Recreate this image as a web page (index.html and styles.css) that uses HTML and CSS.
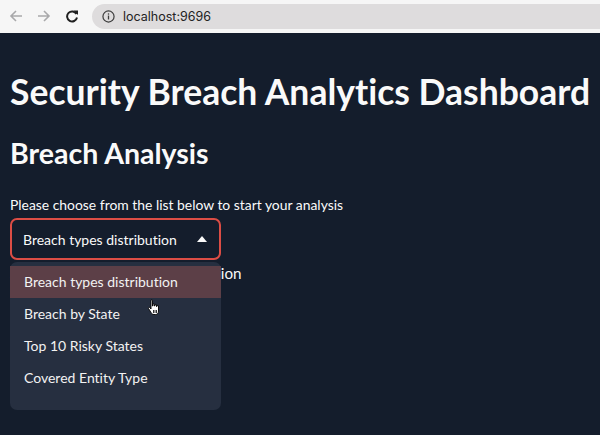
FILE: index.html
```html
<!DOCTYPE html>
<html>
<head>
<meta charset="utf-8">
<link rel="stylesheet" href="styles.css">
</head>
<body>
<div class="chrome">
  <div class="nav">
    <svg class="nav-icon" width="14" height="14" viewBox="0 0 14 14"><path d="M13 7H2M7 2L2 7l5 5" fill="none" stroke="#a9a9ab" stroke-width="1.6"/></svg>
    <svg class="nav-icon" width="14" height="14" viewBox="0 0 14 14"><path d="M1 7h11M7 2l5 5-5 5" fill="none" stroke="#a9a9ab" stroke-width="1.6"/></svg>
    <svg class="nav-icon" width="14" height="14" viewBox="0 0 14 14"><path d="M11.5 5A5 5 0 1 0 12 8.5" fill="none" stroke="#1f1f1f" stroke-width="2"/><path d="M8.5 1.5h4.5v4.5z" fill="#1f1f1f"/></svg>
  </div>
  <div class="omnibox">
    <svg width="13" height="13" viewBox="0 0 14 14"><circle cx="7" cy="7" r="6" fill="none" stroke="#3c3c3c" stroke-width="1.3"/><rect x="6.3" y="6" width="1.4" height="4.2" fill="#3c3c3c"/><rect x="6.3" y="3.6" width="1.4" height="1.4" fill="#3c3c3c"/></svg>
    <span class="url">localhost:9696</span>
  </div>
</div>
<main class="page">
  <h1 class="title">Security Breach Analytics Dashboard</h1>
  <h2 class="subtitle">Breach Analysis</h2>
  <p class="label">Please choose from the list below to start your analysis</p>
  <div class="select-wrap">
    <div class="select">
      <span>Breach types distribution</span>
      <svg width="10" height="6" viewBox="0 0 10 6"><path d="M0 6L5 0l5 6z" fill="#fafafa"/></svg>
    </div>
    <div class="menu">
      <div class="item active">Breach types distribution</div>
      <div class="item">Breach by State</div>
      <div class="item">Top 10 Risky States</div>
      <div class="item">Covered Entity Type</div>
    </div>
    <svg class="cursor" width="14" height="17" viewBox="0 0 14 17"><path d="M4 1.5c0-.8 1.5-.8 1.5 0V7h.5V5.5c0-.8 1.5-.8 1.5 0V7h.5V6c0-.8 1.5-.8 1.5 0v1.5h.5V7c0-.8 1.5-.8 1.5 0v5c0 2-1 3.5-3 3.5H7c-1.5 0-2.3-.8-3-2L1.5 9.5c-.5-.8.5-1.6 1.2-1L4 10z" fill="#fff" stroke="#000" stroke-width="0.9"/><path d="M6.5 11v3M8 11v3M9.5 11v3" stroke="#000" stroke-width="0.8"/></svg>
  </div>
  <p class="behind">Selected: Breach types distribution</p>
</main>
</body>
</html>
```

FILE: styles.css
```css
html, body {
  margin: 0;
  padding: 0;
}
body {
  width: 600px;
  height: 435px;
  overflow: hidden;
  background: #141d2c;
  font-family: Lato, "Noto Sans", sans-serif;
  font-variant-ligatures: none;
  color: #fafafa;
}
.chrome {
  height: 33px;
  background: #f6f6f6;
  display: flex;
  align-items: center;
  box-sizing: border-box;
  padding-bottom: 1px;
}
.nav {
  display: flex;
  gap: 14px;
  padding-left: 9px;
  width: 83px;
  flex: none;
}
.nav-icon {
  display: block;
}
.omnibox {
  flex: 1;
  height: 25px;
  background: #dedcdd;
  border-radius: 13px 0 0 13px;
  display: flex;
  align-items: center;
  padding-left: 10px;
  gap: 8px;
}
.url {
  font-family: Inter, "Liberation Sans", sans-serif;
  font-size: 12.5px;
  color: #232323;
}
.page {
  padding: 0 10px;
}
.title {
  margin: 37px 0 0;
  font-size: 35.5px;
  line-height: 43px;
  font-weight: 700;
  white-space: nowrap;
}
.subtitle {
  margin: 23px 0 0;
  font-size: 28.5px;
  line-height: 34px;
  font-weight: 700;
}
.label {
  margin: 26px 0 0;
  font-size: 13.9px;
  line-height: 18px;
}
.select-wrap {
  position: relative;
  width: 211px;
  margin-top: 4px;
}
.select {
  height: 42px;
  box-sizing: border-box;
  border: 2px solid #dc4d45;
  border-radius: 7px;
  display: flex;
  align-items: center;
  justify-content: space-between;
  padding: 0 12px 0 11px;
  font-size: 14px;
}
.menu {
  position: absolute;
  top: 44px;
  left: 0;
  width: 211px;
  height: 148px;
  background: #262f40;
  border-radius: 7px;
  padding-top: 4px;
  box-sizing: border-box;
  z-index: 2;
}
.item {
  height: 32px;
  line-height: 32px;
  padding-left: 14px;
  font-size: 14px;
  color: #f2f2f2;
}
.item.active {
  background: #5c3f47;
}
.cursor {
  position: absolute;
  left: 137px;
  top: 81px;
  z-index: 3;
}
.behind {
  margin: 3px 0 0;
  font-size: 15.2px;
  line-height: 20px;
}
```
